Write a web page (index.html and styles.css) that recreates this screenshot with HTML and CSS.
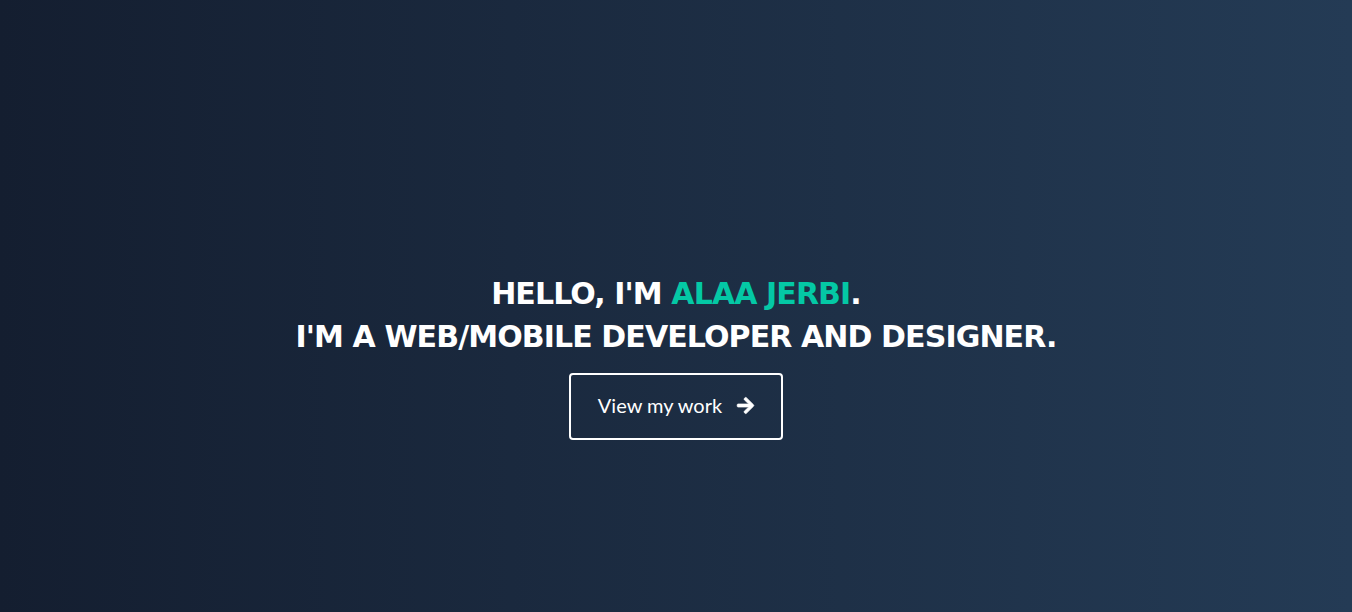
FILE: index.html
```html
<!DOCTYPE html>
<html>
<head>
<meta charset="utf-8">
<link rel="stylesheet" href="styles.css">
</head>
<body>
<section class="hero">
  <div class="hero-inner">
    <h1 class="title">HELLO, I'M <span class="accent">ALAA JERBI</span>.<br>I'M A WEB/MOBILE DEVELOPER AND DESIGNER.</h1>
    <a class="btn" href="#">View my work
      <svg class="arrow" viewBox="0 0 448 512" width="17" height="19" aria-hidden="true"><path fill="#fff" stroke="#fff" stroke-width="20" d="M190.5 66.9l22.2-22.2c9.4-9.4 24.6-9.4 33.9 0L441 239c9.4 9.4 9.4 24.6 0 33.9L246.6 467.3c-9.4 9.4-24.6 9.4-33.9 0l-22.2-22.2c-9.5-9.5-9.3-25 .4-34.3L311.4 296H24c-13.3 0-24-10.7-24-24v-32c0-13.3 10.7-24 24-24h287.4L190.9 101.2c-9.8-9.3-10-24.8-.4-34.3z"/></svg>
    </a>
  </div>
</section>
</body>
</html>
```
FILE: styles.css
```css
html, body {
  margin: 0;
  padding: 0;
  height: 100%;
}
.hero {
  height: 612px;
  background: linear-gradient(to right, #141e30, #243b55);
  display: flex;
  justify-content: center;
  align-items: flex-start;
  box-sizing: border-box;
  padding-top: 272px;
}
.hero-inner {
  display: flex;
  flex-direction: column;
  align-items: center;
}
.title {
  margin: 0;
  font-family: "DejaVu Sans", sans-serif;
  font-weight: 700;
  font-size: 30px;
  letter-spacing: -0.9px;
  line-height: 43px;
  color: #fff;
  text-align: center;
}
.accent {
  color: #04c8a5;
}
.btn {
  margin-top: 15px;
  box-sizing: border-box;
  width: 214px;
  height: 67px;
  padding-bottom: 3px;
  border: 2px solid #fff;
  border-radius: 4px;
  display: flex;
  align-items: center;
  justify-content: center;
  gap: 15px;
  font-family: Lato, sans-serif;
  font-size: 20px;
  color: #fff;
  text-decoration: none;
}
.arrow {
  display: block;
  overflow: visible;
}
```
